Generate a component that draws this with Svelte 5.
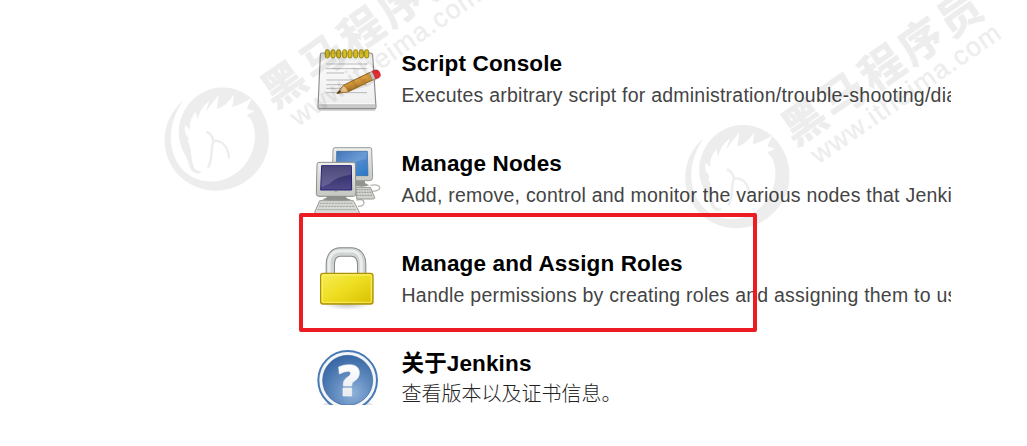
<script>
  const items = [
    { icon: 'notepad', title: 'Script Console', text: 'Executes arbitrary script for administration/trouble-shooting/diagnostics.' },
    { icon: 'nodes', title: 'Manage Nodes', text: 'Add, remove, control and monitor the various nodes that Jenkins runs jobs on.' },
    { icon: 'lock', title: 'Manage and Assign Roles', text: 'Handle permissions by creating roles and assigning them to users' },
    { icon: 'help', title: '关于Jenkins', text: '查看版本以及证书信息。' }
  ];
  const rings = [82, 99, 116, 134, 150, 167, 184, 200];
  const marks = [{ x: 0, y: 0 }, { x: 520.5, y: 37.5 }];
</script>

<main>
  <div class="list">
    {#each items as item}
      <div class="row">
        <svg class="icon" viewBox="0 0 300 270" aria-hidden="true">
          {#if item.icon === 'notepad'}
            <defs>
              <linearGradient id="paper" x1="0" y1="0" x2="0" y2="1"><stop offset="0" stop-color="#dededc" /><stop offset=".2" stop-color="#fafafa" /><stop offset="1" stop-color="#eeeeee" /></linearGradient>
              <linearGradient id="wood" x1="0" y1="0" x2=".5" y2="1"><stop offset="0" stop-color="#e9b766" /><stop offset=".55" stop-color="#d69a3c" /><stop offset="1" stop-color="#8c5912" /></linearGradient>
            </defs>
            <path d="M53 221H229L224 228H59Z" fill="#bbb" opacity=".6" />
            <path d="M66 54H211Q217 54 218 60L228 216Q228 221 222 221H60Q54 221 54 216L61 59Q61 54 66 54Z" fill="url(#paper)" stroke="#8d8d8d" stroke-width="3.5" />
            <path d="M57 207H225L226 219H56Z" fill="#c9c9c9" /><path d="M58 206H225" stroke="#fff" stroke-width="2" />
            {#each rings as x}
              <rect x={x - 6} y="44" width="12" height="25" rx="6" fill="#d7bd20" stroke="#9b8716" stroke-width="3" />
            {/each}
            <path d="M79 87H201M79 101H201M79 114H133M79 135H201M79 149H201M79 160H133M79 173H201" stroke="#b9b9b9" stroke-width="3" />
            <path d="M119 174L205 150L228 132" fill="none" stroke="#777" stroke-width="7" opacity=".18" />
            <path d="M111 175L130 151L210 112L222 133L145 170Z" fill="url(#wood)" stroke="#8f6220" stroke-width="3" />
            <path d="M111 175L130 152L137 156L145 170Z" fill="#e5c28a" stroke="#9c7332" stroke-width="2" />
            <path d="M110 176L119 165L124 171Z" fill="#4b3a23" />
            <path d="M207 114L217 109L229 131L218 135Z" fill="#c9c0b8" stroke="#8c8178" stroke-width="2" />
            <path d="M216 109Q230 101 237 109Q245 122 237 128L227 132Q223 117 216 109Z" fill="#e72b32" stroke="#ad2026" stroke-width="2" />
          {:else if item.icon === 'nodes'}
            <defs>
              <linearGradient id="blue" x2="1" y2="1"><stop offset="0" stop-color="#2862ad" /><stop offset=".5" stop-color="#568cce" /><stop offset="1" stop-color="#2878cb" /></linearGradient>
              <linearGradient id="navy" x2="0" y2="1"><stop offset="0" stop-color="#28245f" /><stop offset="1" stop-color="#504b88" /></linearGradient>
              <linearGradient id="shell" x2="0" y2="1"><stop offset="0" stop-color="#eeeeec" /><stop offset="1" stop-color="#c5c7c1" /></linearGradient>
            </defs>
            <path d="M211 151Q236 147 239 157T216 169M169 195Q191 190 192 202T174 214" fill="none" stroke="#b4b6b2" stroke-width="4" />
            <path d="M165 157H211L224 188Q225 192 218 192H171Z" fill="#d1d3cf" stroke="#969894" stroke-width="3" />
            <path d="M168 164H211M168 172H214M170 181H218" stroke="#999c96" stroke-width="3" stroke-dasharray="6 2" />
            <path d="M157 134H195V144L208 151Q182 160 158 150Z" fill="#92958f" />
            <path d="M105 38H210Q216 38 215 45L218 127Q218 136 210 137H104Q97 137 97 130L99 45Q99 38 105 38Z" fill="url(#shell)" stroke="#999c98" stroke-width="3" />
            <path d="M110 49H202L204 122H108Z" fill="url(#blue)" stroke="#37699f" stroke-width="2" />
            <path d="M110 50H200V73Q152 78 126 112H108Z" fill="#fff" opacity=".12" />
            <path d="M80 179H139V189L154 195Q106 205 66 193L80 188Z" fill="#8d908b" />
            <path d="M59 197H160L178 231Q178 236 173 236H49Q43 236 45 229Z" fill="#d7d9d4" stroke="#999c97" stroke-width="3" />
            <path d="M60 205H157M57 214H164M52 224H167" stroke="#a4a7a0" stroke-width="3" stroke-dasharray="7 2" />
            <path d="M57 82H161Q167 82 166 89L168 174Q168 184 160 184H57Q49 184 49 176L51 89Q51 82 57 82Z" fill="url(#shell)" stroke="#8c8f89" stroke-width="3" />
            <path d="M65 92H154L155 165H62Z" fill="url(#navy)" stroke="#222074" stroke-width="3" />
            <path d="M66 93H153V119Q109 124 88 146L64 157Z" fill="#fff" opacity=".17" />
            <path d="M102 170H113" stroke="#8f918b" stroke-width="2" />
          {:else if item.icon === 'lock'}
            <defs>
              <linearGradient id="gold" x2="1" y2="1"><stop offset="0" stop-color="#f7ec57" /><stop offset=".45" stop-color="#efdf24" /><stop offset="1" stop-color="#d9bf00" /></linearGradient>
              <radialGradient id="shade"><stop stop-color="#666" stop-opacity=".4" /><stop offset="1" stop-color="#666" stop-opacity="0" /></radialGradient>
            </defs>
            <ellipse cx="141" cy="208" rx="72" ry="17" fill="url(#shade)" />
            <path d="M91 119V88C91 63 104 51 121 51H153C172 51 185 63 185 88V119" fill="none" stroke="#858885" stroke-width="28" />
            <path d="M91 119V88C91 63 104 51 121 51H153C172 51 185 63 185 88V119" fill="none" stroke="#d0d4d2" stroke-width="22" />
            <path d="M87 119V88C87 62 101 48 121 48H153C172 48 184 62 184 88V119" fill="none" stroke="#eceeec" stroke-width="9" />
            <rect x="62" y="115" width="157" height="92" rx="7" fill="url(#gold)" stroke="#ad9209" stroke-width="4" />
            <rect x="67" y="120" width="147" height="82" rx="4" fill="none" stroke="#fff477" stroke-width="4" opacity=".65" />
          {:else}
            <defs><radialGradient id="disc" cx=".6" cy=".75" r=".75"><stop stop-color="#8fb2da" /><stop offset=".55" stop-color="#5b86bb" /><stop offset="1" stop-color="#3867a4" /></radialGradient>
              <linearGradient id="question" x2="0" y2="1"><stop stop-color="#fff" /><stop offset="1" stop-color="#e8eaed" /></linearGradient></defs>
            <ellipse cx="144" cy="216" rx="80" ry="20" fill="#aaa" opacity=".3" />
            <circle cx="143" cy="136" r="88" fill="#f3f5f8" stroke="#477ab5" stroke-width="6" />
            <circle cx="143" cy="136" r="75" fill="url(#disc)" stroke="#356199" stroke-width="2" />
            <path d="M116 96Q130 89 148 89C167 89 178 98 178 113C178 127 170 134 160 140Q155 144 155 153H130V146C130 136 137 130 145 125Q152 121 152 115Q152 109 145 109Q132 109 118 117ZM129 159H155V183H129Z" fill="url(#question)" stroke="#f3f5f8" stroke-width="2" />
          {/if}
        </svg>
        <div class="copy">
          <div class="title">{item.title}</div>
          <div class="desc" class:chinese={item.icon === 'help'}>{item.text}</div>
        </div>
      </div>
    {/each}
  </div>

  <svg class="watermark" viewBox="0 0 1027 446" aria-hidden="true">
    {#each marks as mark}
      <g transform="translate({mark.x} {mark.y})">
        <g transform="translate(150.5 0) scale(.33333)">
          <path d="M97 303C30 360 25 460 81 522C145 590 250 587 311 523C372 461 369 362 309 301C247 240 149 254 105 326C75 374 81 428 105 466C115 485 117 511 130 517Q145 526 154 514Q137 515 130 501C119 470 125 445 112 425Q119 416 107 405Q100 394 104 375L118 389Q115 359 136 335L142 358Q147 324 177 302L166 335Q184 309 205 285L199 327Q226 320 250 284L246 320Q270 314 304 294L289 326L312 334L289 345Q307 359 312 390C321 448 287 510 232 534C180 557 116 543 83 492C45 431 60 358 97 303Z" />
          <path class="line" d="M168 396Q184 400 189 423C178 450 188 485 172 503M189 423Q230 419 236 476" />
        </g>
        <g transform="translate(295 128) rotate(-34.7)">
          <text class="brand" x="-6" y="-27" textLength="232">黑马程序员</text>
          <text class="site" x="3" y="1" textLength="224">www.itheima.com</text>
        </g>
      </g>
    {/each}
  </svg>
  <div class="highlight"></div>
</main>

<style>
  :global(body) { margin: 0; background: #fff; }
  main { position: relative; width: 1027px; height: 446px; overflow: hidden; background: #fff; font-family: "Liberation Sans", "Noto Sans CJK SC", sans-serif; }
  .list { box-sizing: border-box; width: 951px; height: 405px; padding: 35px 0 0 300px; overflow: hidden; }
  .row { display: flex; height: 100px; gap: 1.5px; }
  .icon { width: 100px; height: 90px; flex: none; }
  .copy { padding-top: 13px; white-space: nowrap; }
  .title { height: 32px; line-height: 32px; font-size: 22.5px; font-weight: 700; color: #000; letter-spacing: .14px; }
  .desc { height: 30px; line-height: 30px; font-size: 19.5px; color: #444; letter-spacing: .23px; }
  .chinese { font-weight: 300; font-size: 20px; color: #222; letter-spacing: 0; line-height: 28px; }
  .watermark { position: absolute; inset: 0; width: 1027px; height: 446px; fill: #000; opacity: .068; pointer-events: none; }
  .line { fill: none; stroke: #000; stroke-width: 7; }
  .brand { font: 700 43px "Noto Sans CJK SC", sans-serif; stroke: #000; stroke-width: .8; }
  .site { font: 26.5px "Liberation Sans", sans-serif; stroke: #000; stroke-width: .5; }
  .highlight { position: absolute; left: 299px; top: 213px; width: 450px; height: 111px; border: 4px solid #ed1c24; border-radius: 2px; }
</style>
